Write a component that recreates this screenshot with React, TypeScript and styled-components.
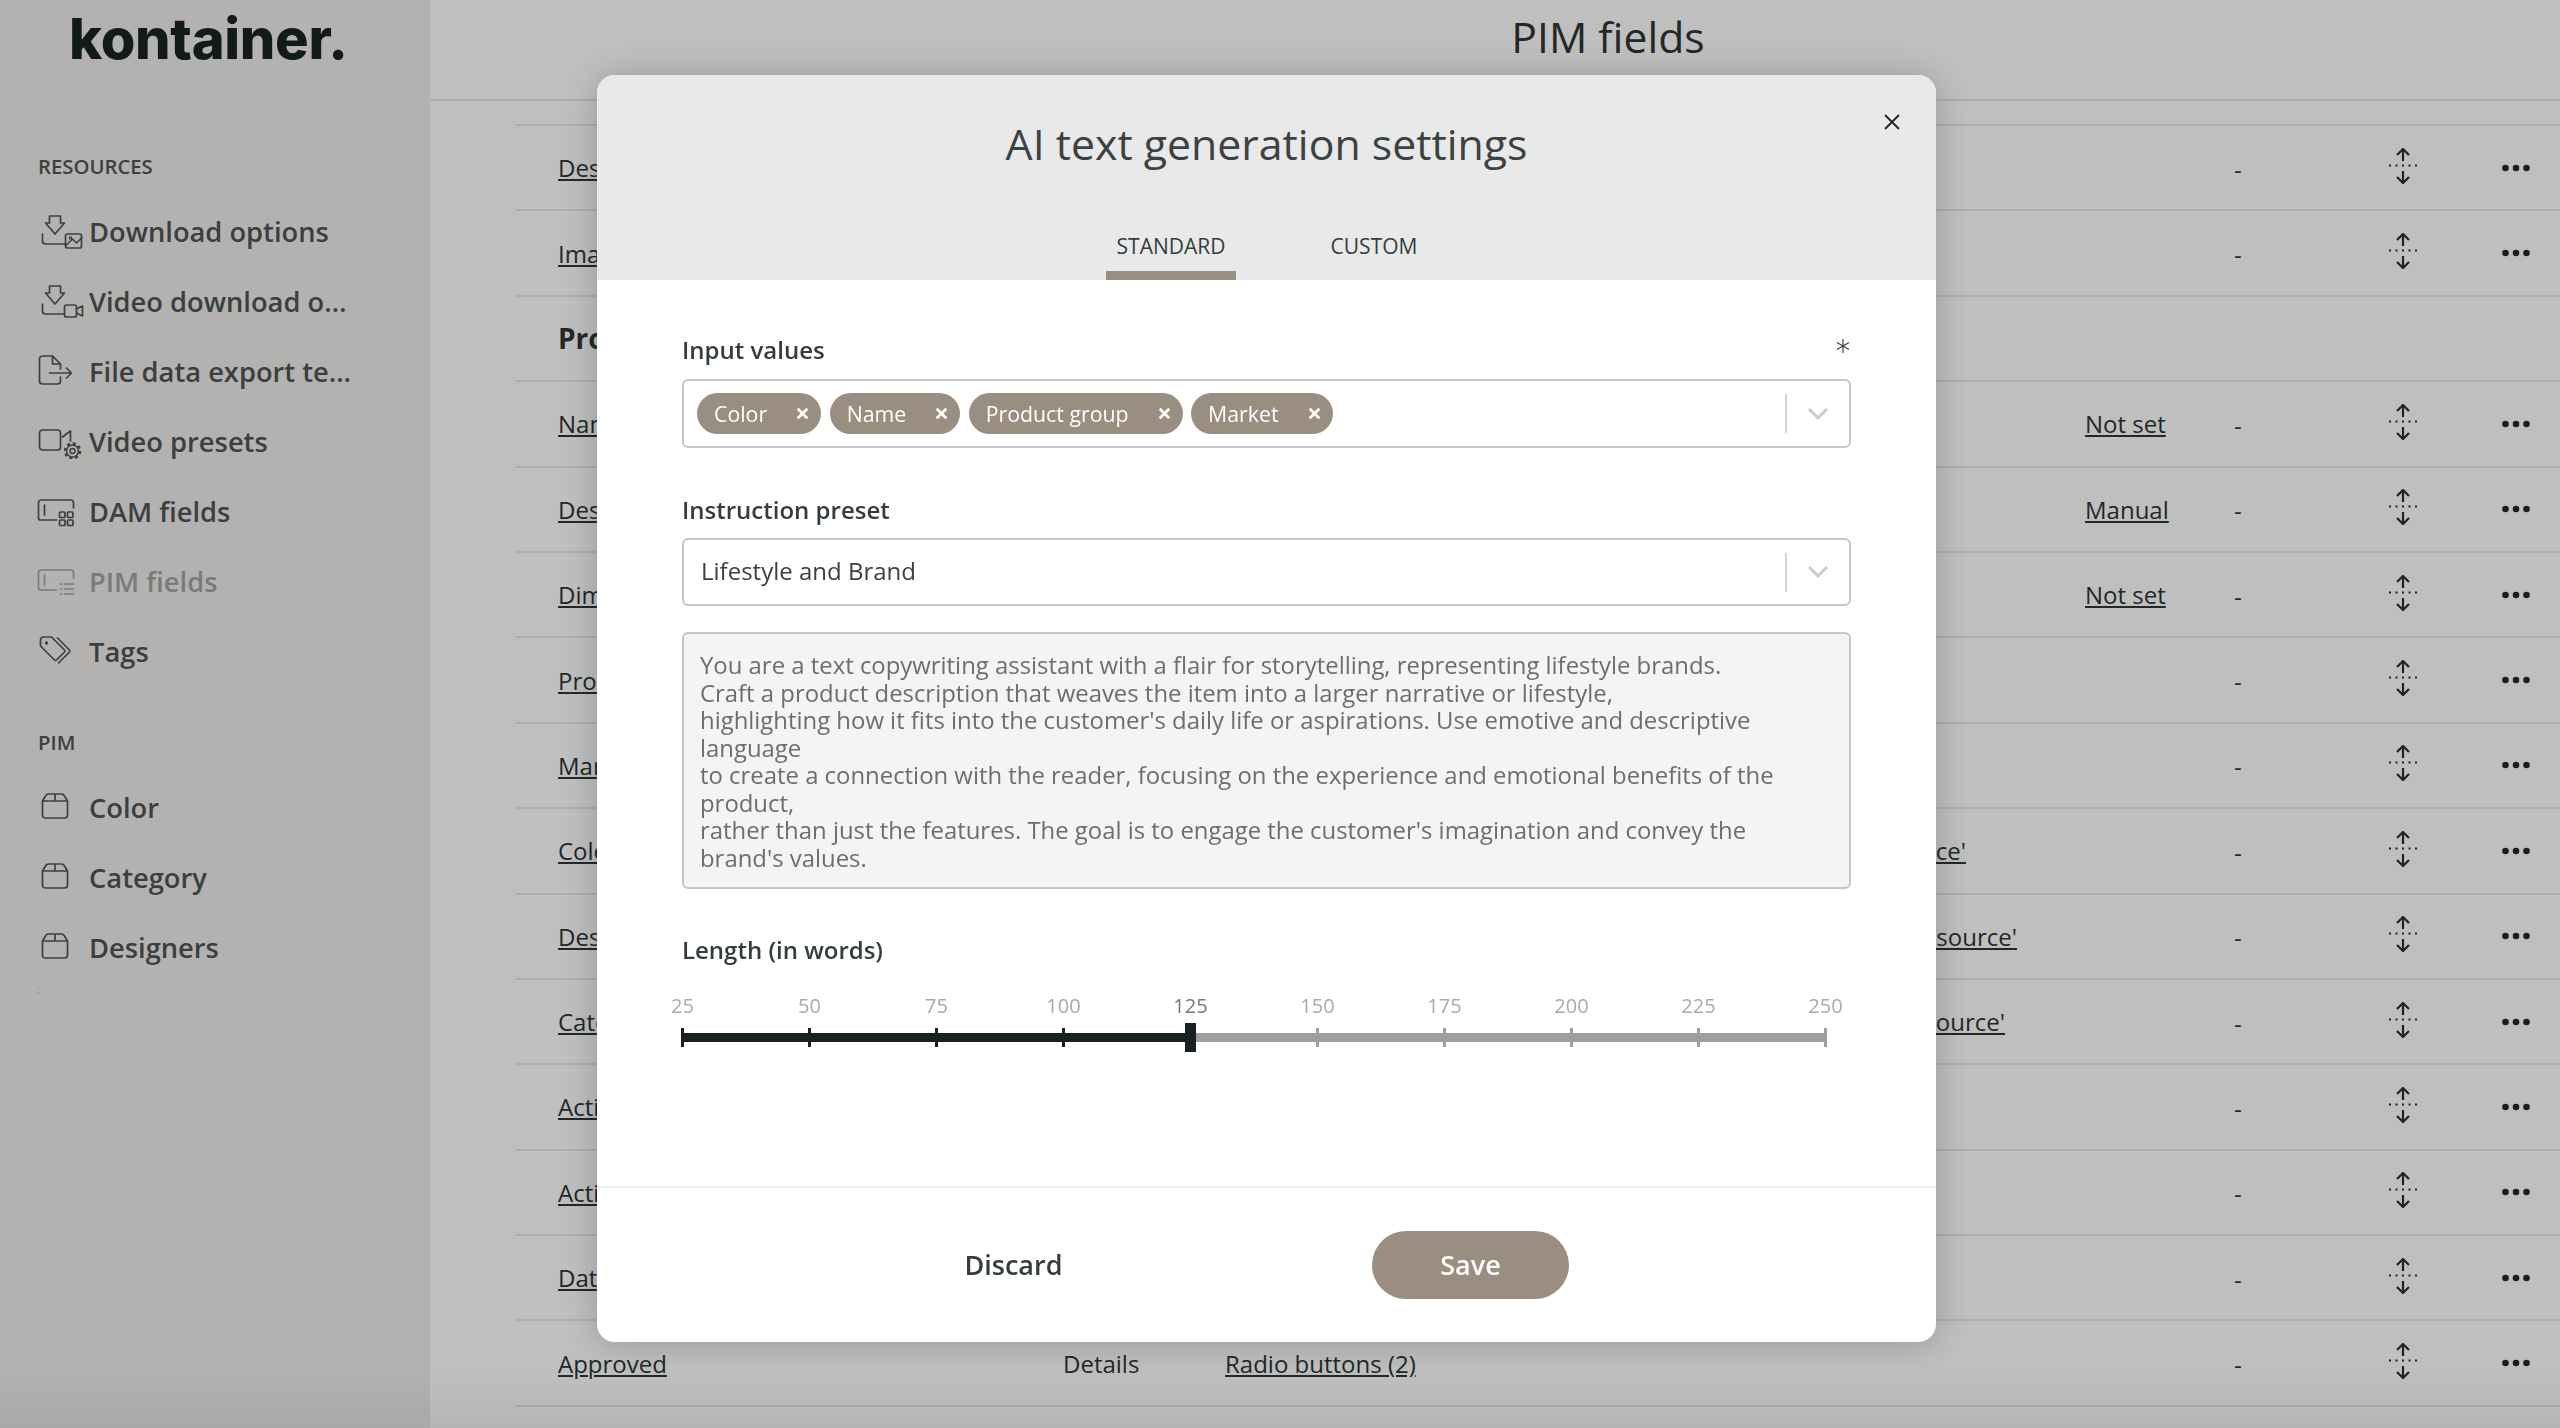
import React from "react";
import styled, { createGlobalStyle } from "styled-components";

const GlobalStyle = createGlobalStyle`
    html, body {
        margin: 0;
        height: 100%;
        overflow: hidden;
        background: #ffffff;
        font-family: "Open Sans", "Noto Sans", sans-serif;
    }
`;

const Page = styled.div`
    display: flex;
    width: 2560px;
    height: 1428px;
    overflow: hidden;
`;

const Sidebar = styled.aside`
    flex: 0 0 430px;
    display: flex;
    flex-direction: column;
    background: #f0eeec;
`;

const Logo = styled.div`
    height: 152px;
    padding-left: 69px;
    font-family: Inter, "Open Sans", sans-serif;
    font-size: 56px;
    font-weight: 800;
    line-height: 78px;
    letter-spacing: -0.3px;
    color: #182324;
`;

const SectionLabel = styled.div<{ $gap?: number }>`
    margin: ${(p) => p.$gap ?? 0}px 0 16px 38px;
    font-size: 20.3px;
    font-weight: 600;
    line-height: 28px;
    color: #4e5555;
`;

const NavItem = styled.div<{ $active?: boolean }>`
    display: flex;
    align-items: center;
    height: 70px;
    padding-left: 36px;
    font-size: 27.3px;
    font-weight: 600;
    color: ${(p) => (p.$active ? "#a3a3a1" : "#4e5555")};
`;

const NavIcon = styled.svg`
    flex: 0 0 53px;
    width: 50px;
    height: 36px;
    fill: none;
    stroke: currentColor;
    stroke-width: 1.7;
    stroke-linecap: round;
    stroke-linejoin: round;
`;

const NavText = styled.span`
    max-width: 266px;
    overflow: hidden;
    white-space: nowrap;
    text-overflow: ellipsis;
`;

const TinyMark = styled.div`
    margin: 3px 0 0 37px;
    font-size: 9px;
    line-height: 10px;
    color: #999;
`;

const Main = styled.main`
    flex: 1;
    min-width: 0;
`;

const TopBar = styled.header`
    height: 101px;
    padding-left: 226px;
    box-sizing: border-box;
    border-bottom: 2px solid #e8e8e8;
    text-align: center;
    font-size: 42.7px;
    line-height: 74px;
    color: #2e3535;
`;

const FieldList = styled.div`
    margin: 23px 0 0 85px;
    border-top: 2px solid #e8e8e8;
`;

const FieldRow = styled.div`
    display: grid;
    grid-template-columns: 505px 162px 860px 152px 130px 72px 113px;
    align-items: center;
    height: 85.4px;
    padding-left: 43px;
    box-sizing: border-box;
    border-bottom: 2px solid #e8e8e8;
    font-size: 24px;
    color: #2e3535;
`;

const FieldLink = styled.span<{ $endInset?: number }>`
    text-decoration: underline;
    white-space: nowrap;
    ${(p) => p.$endInset !== undefined && `justify-self: end; margin-right: ${p.$endInset}px;`}
`;

const GroupTitle = styled.span`
    font-size: 28px;
    font-weight: 700;
`;

const Dash = styled.span`
    margin: 3px 0 0 -3px;
`;

const MoveIcon = styled.svg`
    justify-self: center;
    width: 30px;
    height: 36px;
    margin-bottom: 4px;
    fill: none;
    stroke: #263030;
    stroke-width: 2.2;
`;

const MoreIcon = styled.svg`
    justify-self: end;
    width: 72px;
    height: 10px;
    fill: #1f2a2a;
`;

const Overlay = styled.div`
    position: fixed;
    inset: 0;
    background: linear-gradient(to bottom, rgba(0, 0, 0, 0.25) 96%, rgba(0, 0, 0, 0.29) 100%);
`;

const Modal = styled.section`
    position: fixed;
    top: 75px;
    left: 597px;
    display: flex;
    flex-direction: column;
    width: 1339px;
    height: 1267px;
    overflow: hidden;
    border-radius: 18px;
    background: #ffffff;
    box-shadow: 0 2px 36px rgba(0, 0, 0, 0.22);
`;

const ModalHead = styled.div`
    position: relative;
    display: flex;
    flex-direction: column;
    align-items: center;
    flex: 0 0 205px;
    background: #e9e9e9;
`;

const ModalTitle = styled.h2`
    margin: 41px 0 0;
    font-size: 42.8px;
    font-weight: 400;
    line-height: 56px;
    color: #3a4243;
`;

const CloseIcon = styled.svg`
    position: absolute;
    top: 39px;
    right: 36px;
    width: 16px;
    height: 16px;
    stroke: #1c2626;
    stroke-width: 1.8;
`;

const Tabs = styled.div`
    display: flex;
    gap: 85px;
    margin-top: auto;
`;

const Tab = styled.div<{ $active?: boolean; $width: number }>`
    width: ${(p) => p.$width}px;
    height: 62px;
    box-sizing: border-box;
    border-bottom: 9px solid ${(p) => (p.$active ? "#9a8e81" : "transparent")};
    text-align: center;
    font-size: 21px;
    font-weight: 500;
    line-height: 56px;
    color: #333d3d;
`;

const ModalBody = styled.div`
    flex: 1;
    padding: 54px 85px 0 85px;
`;

const LabelRow = styled.div`
    display: flex;
    align-items: center;
    justify-content: space-between;
`;

const FieldLabel = styled.label<{ $top?: number }>`
    display: block;
    margin-top: ${(p) => p.$top ?? 0}px;
    font-size: 24px;
    font-weight: 600;
    line-height: 32px;
    color: #333d3d;
`;

const RequiredIcon = styled.svg`
    width: 14px;
    height: 14px;
    margin: -9px 1px 0 0;
    stroke: #3a4243;
    stroke-width: 1.2;
`;

const SelectBox = styled.div<{ $height: number; $top: number }>`
    display: flex;
    align-items: center;
    height: ${(p) => p.$height}px;
    margin-top: ${(p) => p.$top}px;
    box-sizing: border-box;
    border: 2px solid #c6c6c6;
    border-radius: 6px;
`;

const SelectValue = styled.div`
    flex: 1;
    display: flex;
    gap: 8.5px;
    padding-left: 13px;
    font-size: 24px;
    color: #3a3f3f;
`;

const PlainValue = styled.span`
    padding: 0 0 4px 4px;
`;

const Chip = styled.span`
    display: flex;
    align-items: center;
    gap: 30px;
    height: 41px;
    padding: 0 13px 0 17px;
    border-radius: 21px;
    background: #9a8e81;
    font-size: 21.3px;
    color: #ffffff;
`;

const ChipClose = styled.svg`
    width: 11px;
    height: 11px;
    stroke: #ffffff;
    stroke-width: 4;
`;

const SelectDivider = styled.div`
    width: 2px;
    height: 39px;
    background: #d4d4d4;
`;

const ChevronIcon = styled.svg`
    width: 20px;
    height: 12px;
    margin: 0 21px 0 21px;
    fill: none;
    stroke: #cccccc;
    stroke-width: 3;
`;

const PromptBox = styled.div`
    height: 257px;
    margin-top: 26px;
    padding: 17px 16px 0;
    box-sizing: border-box;
    border: 2px solid #c6c6c6;
    border-radius: 6px;
    background: #f4f4f4;
    font-size: 23.9px;
    line-height: 27.5px;
    white-space: pre-wrap;
    color: #6b6e6e;
`;

const Slider = styled.div`
    width: 1146px;
    margin: 26px 0 0 -1px;
`;

const SliderLabels = styled.div`
    display: flex;
    justify-content: space-between;
    padding: 0 1.5px;
    margin-bottom: 8px;
`;

const SliderLabel = styled.span<{ $active?: boolean }>`
    display: flex;
    justify-content: center;
    width: 0;
    font-size: 20px;
    line-height: 28px;
    color: ${(p) => (p.$active ? "#777777" : "#a9a9a9")};
`;

const Rail = styled.div<{ $pct: number }>`
    position: relative;
    display: flex;
    justify-content: space-between;
    height: 19px;
    background: linear-gradient(to right, #182122 ${(p) => p.$pct}%, #9f9f9d ${(p) => p.$pct}%) center / 100% 9px no-repeat;
`;

const Tick = styled.span<{ $on: boolean }>`
    width: 3px;
    background: ${(p) => (p.$on ? "#182122" : "#9f9f9d")};
`;

const Thumb = styled.span<{ $pct: number }>`
    position: absolute;
    top: -5px;
    left: calc(${(p) => p.$pct}% - 5px);
    width: 11px;
    height: 29px;
    background: #182122;
`;

const ModalFoot = styled.div`
    display: flex;
    align-items: center;
    justify-content: center;
    gap: 260px;
    flex: 0 0 156px;
    padding-right: 49px;
    box-sizing: border-box;
    border-top: 2px solid #ececec;
`;

const FootButton = styled.button<{ $primary?: boolean }>`
    width: 197px;
    height: 68px;
    padding: 0 0 2px;
    border: 0;
    border-radius: 34px;
    background: ${(p) => (p.$primary ? "#9a8e81" : "transparent")};
    font-family: inherit;
    font-size: 27px;
    font-weight: 600;
    color: ${(p) => (p.$primary ? "#ffffff" : "#333d3d")};
`;

type RowData = {
    name: string;
    kind?: string;
    field?: string;
    fieldInset?: number;
    status?: string;
    group?: boolean;
};

const rows: RowData[] = [
    { name: "Description" },
    { name: "Image" },
    { name: "Product", group: true },
    { name: "Name", status: "Not set" },
    { name: "Description", status: "Manual" },
    { name: "Dimensions", status: "Not set" },
    { name: "Product group" },
    { name: "Market" },
    { name: "Color", field: "Linked to 'Color source'", fieldInset: 119 },
    { name: "Designer", field: "Linked to 'Designer source'", fieldInset: 68 },
    { name: "Category", field: "Linked to 'Category source'", fieldInset: 80 },
    { name: "Active" },
    { name: "Active from" },
    { name: "Date" },
    { name: "Approved", kind: "Details", field: "Radio buttons (2)" },
    { name: "" },
];

const MoveGlyph = () => (
    <MoveIcon viewBox="0 0 30 36">
        <path d="M15 1v12M9 7l6-6 6 6M15 23v12M9 29l6 6 6-6" />
        <path d="M1 17.5h28" strokeDasharray="2 4.5" strokeLinecap="butt" />
    </MoveIcon>
);

const MoreGlyph = () => (
    <MoreIcon viewBox="0 0 72 10">
        <circle cx="25.5" cy="5" r="3.3" />
        <circle cx="36" cy="5" r="3.3" />
        <circle cx="46.5" cy="5" r="3.3" />
    </MoreIcon>
);

const DownloadArrow = () => (
    <>
        <path d="M10 1h11v7h4l-9.500 11L6 8h4z" />
        <path d="M3 19v7q0 3 3 3h19" />
    </>
);

const BoxGlyph = () => (
    <NavIcon viewBox="0 0 50 36">
        <g transform="translate(4 4)">
            <path d="M1 8l3-5q1-2 3-2h13q2 0 3 2l3 5v14q0 3-3 3H4q-3 0-3-3zM1 8h25M13.500 1v7" />
        </g>
    </NavIcon>
);

const navIcons: Record<string, React.ReactNode> = {
    download: (
        <NavIcon viewBox="0 0 50 36">
            <g transform="translate(2 2)">
                <DownloadArrow />
                <rect x="26" y="19" width="16" height="14" rx="2" />
                <path d="M26 31l7-7 4 4 5-5" strokeWidth="1.500" />
                <circle cx="31" cy="23" r="1.200" strokeWidth="1.200" />
            </g>
        </NavIcon>
    ),
    video: (
        <NavIcon viewBox="0 0 50 36">
            <g transform="translate(2 2)">
                <DownloadArrow />
                <rect x="25" y="20" width="12" height="12" rx="2" />
                <path d="M37 24l6-3v10l-6-3" />
            </g>
        </NavIcon>
    ),
    file: (
        <NavIcon viewBox="0 0 50 36">
            <g transform="translate(0 1)">
                <path d="M15 2H5Q2 2 2 5v22q0 3 3 3h15q3 0 3-3v-4M23 15v-5l-8-8v8h8" />
                <path d="M12 19h22M29 14l5 5-5 5" />
            </g>
        </NavIcon>
    ),
    presets: (
        <NavIcon viewBox="0 0 50 36">
            <g transform="translate(0 4)">
                <rect x="2" y="3" width="21" height="20" rx="3" />
                <path d="M25 10l8-6v10" />
                <circle cx="35" cy="24" r="2.500" strokeWidth="1.500" />
                <circle cx="35" cy="24" r="6" strokeWidth="1.500" />
                <circle cx="35" cy="24" r="7.500" strokeWidth="2.500" strokeDasharray="3 2.900" strokeLinecap="butt" />
            </g>
        </NavIcon>
    ),
    dam: (
        <NavIcon viewBox="0 0 50 36">
            <g transform="translate(-1 5)">
                <path d="M20 22H4q-2 0-2-2V5q0-3 3-3h29q3 0 3 3v5M8 7v10" />
                <rect x="23" y="14" width="5.500" height="5.500" rx="1" />
                <rect x="31" y="14" width="5.500" height="5.500" rx="1" />
                <rect x="23" y="22" width="5.500" height="5.500" rx="1" />
                <rect x="31" y="22" width="5.500" height="5.500" rx="1" />
            </g>
        </NavIcon>
    ),
    pim: (
        <NavIcon viewBox="0 0 50 36">
            <g transform="translate(-1 5)">
                <path d="M20 22H4q-2 0-2-2V5q0-3 3-3h29q3 0 3 3v5M8 7v10" />
                <path d="M24 16h1M24 21h1M24 26h1M28 16h9M28 21h9M28 26h9" />
            </g>
        </NavIcon>
    ),
    tags: (
        <NavIcon viewBox="0 0 50 36">
            <g transform="translate(1 2)">
                <path d="M2 5q0-3 3-3h8l13 13q1 1 0 2l-8 8q-1 1-2 0L2 11z" />
                <path d="M19 3l12 12q1 1 0 2L20 28" />
                <circle cx="8" cy="8" r=".8" />
            </g>
        </NavIcon>
    ),
};

const resourceItems = [
    { label: "Download options", icon: "download" },
    { label: "Video download options", icon: "video" },
    { label: "File data export templates", icon: "file" },
    { label: "Video presets", icon: "presets" },
    { label: "DAM fields", icon: "dam" },
    { label: "PIM fields", icon: "pim", active: true },
    { label: "Tags", icon: "tags" },
];

const sliderSteps = [25, 50, 75, 100, 125, 150, 175, 200, 225, 250];
const sliderValue = 125;

const X = () => <path d="M1 1l14 14M15 1L1 15" />;

const App = () => {
    const pct = ((sliderValue - 25) / 225) * 100;

    return (
        <>
            <GlobalStyle />
            <Page>
                <Sidebar>
                    <Logo>kontainer.</Logo>
                    <SectionLabel>RESOURCES</SectionLabel>
                    {resourceItems.map((item) => (
                        <NavItem key={item.label} $active={item.active}>
                            {navIcons[item.icon]}
                            <NavText>{item.label}</NavText>
                        </NavItem>
                    ))}
                    <SectionLabel $gap={42}>PIM</SectionLabel>
                    {["Color", "Category", "Designers"].map((label) => (
                        <NavItem key={label}>
                            <BoxGlyph />
                            <NavText>{label}</NavText>
                        </NavItem>
                    ))}
                    <TinyMark>:</TinyMark>
                </Sidebar>
                <Main>
                    <TopBar>PIM fields</TopBar>
                    <FieldList>
                        {rows.map((row, index) => (
                            <FieldRow key={index}>
                                {row.group ? <GroupTitle>{row.name}</GroupTitle> : <FieldLink>{row.name}</FieldLink>}
                                <span>{row.kind}</span>
                                {row.field ? <FieldLink $endInset={row.fieldInset}>{row.field}</FieldLink> : <span />}
                                {row.status ? <FieldLink>{row.status}</FieldLink> : <span />}
                                {row.group ? (
                                    <span />
                                ) : (
                                    <>
                                        <Dash>-</Dash>
                                        <MoveGlyph />
                                        <MoreGlyph />
                                    </>
                                )}
                            </FieldRow>
                        ))}
                    </FieldList>
                </Main>
            </Page>
            <Overlay />
            <Modal>
                <ModalHead>
                    <ModalTitle>AI text generation settings</ModalTitle>
                    <CloseIcon viewBox="0 0 16 16">
                        <X />
                    </CloseIcon>
                    <Tabs>
                        <Tab $active $width={130}>STANDARD</Tab>
                        <Tab $width={106}>CUSTOM</Tab>
                    </Tabs>
                </ModalHead>
                <ModalBody>
                    <LabelRow>
                        <FieldLabel>Input values</FieldLabel>
                        <RequiredIcon viewBox="0 0 14 14">
                            <path d="M7 0v14M1 3.500l12 7M13 3.500l-12 7" />
                        </RequiredIcon>
                    </LabelRow>
                    <SelectBox $height={69} $top={13}>
                        <SelectValue>
                            {["Color", "Name", "Product group", "Market"].map((chip) => (
                                <Chip key={chip}>
                                    {chip}
                                    <ChipClose viewBox="0 0 16 16">
                                        <X />
                                    </ChipClose>
                                </Chip>
                            ))}
                        </SelectValue>
                        <SelectDivider />
                        <ChevronIcon viewBox="0 0 20 12">
                            <path d="M1 1l9 9 9-9" />
                        </ChevronIcon>
                    </SelectBox>
                    <FieldLabel $top={46}>Instruction preset</FieldLabel>
                    <SelectBox $height={68} $top={12}>
                        <SelectValue>
                            <PlainValue>Lifestyle and Brand</PlainValue>
                        </SelectValue>
                        <SelectDivider />
                        <ChevronIcon viewBox="0 0 20 12">
                            <path d="M1 1l9 9 9-9" />
                        </ChevronIcon>
                    </SelectBox>
                    <PromptBox>
                        {`You are a text copywriting assistant with a flair for storytelling, representing lifestyle brands.
Craft a product description that weaves the item into a larger narrative or lifestyle,
highlighting how it fits into the customer's daily life or aspirations. Use emotive and descriptive language
to create a connection with the reader, focusing on the experience and emotional benefits of the product,
rather than just the features. The goal is to engage the customer's imagination and convey the brand's values.`}
                    </PromptBox>
                    <FieldLabel $top={45}>Length (in words)</FieldLabel>
                    <Slider>
                        <SliderLabels>
                            {sliderSteps.map((step) => (
                                <SliderLabel key={step} $active={step === sliderValue}>{step}</SliderLabel>
                            ))}
                        </SliderLabels>
                        <Rail $pct={pct}>
                            {sliderSteps.map((step) => (
                                <Tick key={step} $on={step <= sliderValue} />
                            ))}
                            <Thumb $pct={pct} />
                        </Rail>
                    </Slider>
                </ModalBody>
                <ModalFoot>
                    <FootButton>Discard</FootButton>
                    <FootButton $primary>Save</FootButton>
                </ModalFoot>
            </Modal>
        </>
    );
};

export default App;
